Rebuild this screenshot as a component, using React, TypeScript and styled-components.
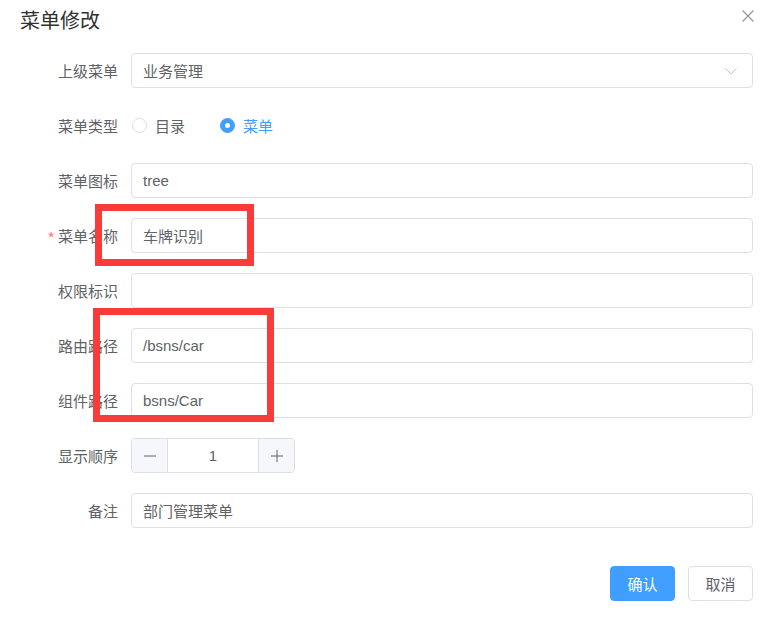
import * as React from 'react';
import styled, { createGlobalStyle } from 'styled-components';

const GlobalStyle = createGlobalStyle`
  html, body {
    margin: 0;
    padding: 0;
    background: #ffffff;
  }
  * {
    box-sizing: border-box;
  }
`;

const FONT = `"Liberation Sans", "Noto Sans CJK SC", sans-serif`;

const Dialog = styled.div`
  position: relative;
  width: 778px;
  height: 621px;
  background: #ffffff;
  font-family: ${FONT};
  color: #606266;
`;

const Header = styled.div`
  display: flex;
  justify-content: space-between;
  align-items: flex-start;
  padding: 8px 26px 0 20px;
  height: 53px;
`;

const Title = styled.div`
  font-size: 20px;
  line-height: 26px;
  color: #303133;
`;

const CloseButton = styled.button`
  border: none;
  background: none;
  padding: 0;
  margin-top: 1px;
  margin-right: -3px;
  width: 14px;
  height: 14px;
  cursor: pointer;
  display: flex;
`;

const Form = styled.div`
  display: flex;
  flex-direction: column;
  gap: 20px;
  padding: 0 25px 0 20px;
`;

const Row = styled.div`
  display: flex;
  align-items: center;
  height: 35px;
`;

const Label = styled.label<{ required?: boolean }>`
  width: 111px;
  padding-right: 13px;
  text-align: right;
  font-size: 15px;
  color: #606266;
  flex-shrink: 0;
  white-space: nowrap;

  &::before {
    content: ${({ required }) => (required ? '"*"' : 'none')};
    color: #f56c6c;
    margin-right: 4px;
  }
`;

const Field = styled.div`
  flex: 1;
  position: relative;
  height: 35px;
  border: 1px solid #dcdfe6;
  border-radius: 4px;
  display: flex;
  align-items: center;
  padding: 0 11px;
  font-size: 15px;
  color: #606266;
`;

const Arrow = styled.span`
  margin-left: auto;
  display: flex;
  margin-right: 3px;
`;

const RadioGroup = styled.div`
  display: flex;
  align-items: center;
  gap: 35px;
  padding-left: 1px;
`;

const RadioItem = styled.span<{ checked?: boolean }>`
  display: flex;
  align-items: center;
  gap: 8px;
  font-size: 15px;
  color: ${({ checked }) => (checked ? '#409eff' : '#606266')};
`;

const RadioCircle = styled.span<{ checked?: boolean }>`
  width: 15px;
  height: 15px;
  border-radius: 50%;
  border: 1px solid ${({ checked }) => (checked ? '#409eff' : '#dcdfe6')};
  background: ${({ checked }) => (checked ? '#409eff' : '#ffffff')};
  display: flex;
  align-items: center;
  justify-content: center;

  &::after {
    content: '';
    width: 5px;
    height: 5px;
    border-radius: 50%;
    background: #ffffff;
    display: ${({ checked }) => (checked ? 'block' : 'none')};
  }
`;

const NumberBox = styled.div`
  width: 164px;
  height: 35px;
  border: 1px solid #dcdfe6;
  border-radius: 4px;
  display: flex;
  overflow: hidden;
`;

const StepButton = styled.span<{ side: 'left' | 'right' }>`
  width: 36px;
  background: #f5f7fa;
  display: flex;
  align-items: center;
  justify-content: center;
  ${({ side }) => (side === 'left' ? 'border-right' : 'border-left')}: 1px solid #dcdfe6;
`;

const NumberValue = styled.span`
  flex: 1;
  display: flex;
  align-items: center;
  justify-content: center;
  font-size: 15px;
  color: #606266;
`;

const Footer = styled.div`
  display: flex;
  justify-content: flex-end;
  gap: 13px;
  padding: 38px 25px 0 0;
`;

const Button = styled.button<{ primary?: boolean }>`
  width: 65px;
  height: 35px;
  border-radius: 4px;
  font-family: ${FONT};
  font-size: 15px;
  border: 1px solid ${({ primary }) => (primary ? '#409eff' : '#dcdfe6')};
  background: ${({ primary }) => (primary ? '#409eff' : '#ffffff')};
  color: ${({ primary }) => (primary ? '#ffffff' : '#606266')};
  cursor: pointer;
`;

const Marker = styled.div<{ x: number; y: number; w: number; h: number }>`
  position: absolute;
  left: ${({ x }) => x}px;
  top: ${({ y }) => y}px;
  width: ${({ w }) => w}px;
  height: ${({ h }) => h}px;
  border: 7px solid #fb3a3a;
  pointer-events: none;
`;

const ChevronDown = () => (
  <svg width="14" height="14" viewBox="0 0 14 14" fill="none">
    <path d="M1.5 4.5L7 10L12.5 4.5" stroke="#c0c4cc" strokeWidth="1" />
  </svg>
);

const CloseIcon = () => (
  <svg width="14" height="14" viewBox="0 0 14 14" fill="none">
    <path d="M1.5 1.5L12.5 12.5M12.5 1.5L1.5 12.5" stroke="#909399" strokeWidth="1.1" />
  </svg>
);

const MinusIcon = () => (
  <svg width="14" height="14" viewBox="0 0 14 14" fill="none">
    <path d="M1 7H13" stroke="#606266" strokeWidth="1" />
  </svg>
);

const PlusIcon = () => (
  <svg width="14" height="14" viewBox="0 0 14 14" fill="none">
    <path d="M1 7H13M7 1V13" stroke="#606266" strokeWidth="1" />
  </svg>
);

const textRows = [
  { label: '菜单图标', value: 'tree' },
  { label: '菜单名称', value: '车牌识别', required: true },
  { label: '权限标识', value: '' },
  { label: '路由路径', value: '/bsns/car' },
  { label: '组件路径', value: 'bsns/Car' },
];

const App = () => (
  <Dialog>
    <GlobalStyle />
    <Header>
      <Title>菜单修改</Title>
      <CloseButton aria-label="close">
        <CloseIcon />
      </CloseButton>
    </Header>
    <Form>
      <Row>
        <Label>上级菜单</Label>
        <Field>
          业务管理
          <Arrow>
            <ChevronDown />
          </Arrow>
        </Field>
      </Row>
      <Row>
        <Label>菜单类型</Label>
        <RadioGroup>
          <RadioItem>
            <RadioCircle />
            目录
          </RadioItem>
          <RadioItem checked>
            <RadioCircle checked />
            菜单
          </RadioItem>
        </RadioGroup>
      </Row>
      {textRows.map((row) => (
        <Row key={row.label}>
          <Label required={row.required}>{row.label}</Label>
          <Field>{row.value}</Field>
        </Row>
      ))}
      <Row>
        <Label>显示顺序</Label>
        <NumberBox>
          <StepButton side="left">
            <MinusIcon />
          </StepButton>
          <NumberValue>1</NumberValue>
          <StepButton side="right">
            <PlusIcon />
          </StepButton>
        </NumberBox>
      </Row>
      <Row>
        <Label>备注</Label>
        <Field>部门管理菜单</Field>
      </Row>
    </Form>
    <Footer>
      <Button primary>确认</Button>
      <Button>取消</Button>
    </Footer>
    <Marker x={95} y={204} w={159} h={62} />
    <Marker x={93} y={308} w={181} h={114} />
  </Dialog>
);

export default App;
